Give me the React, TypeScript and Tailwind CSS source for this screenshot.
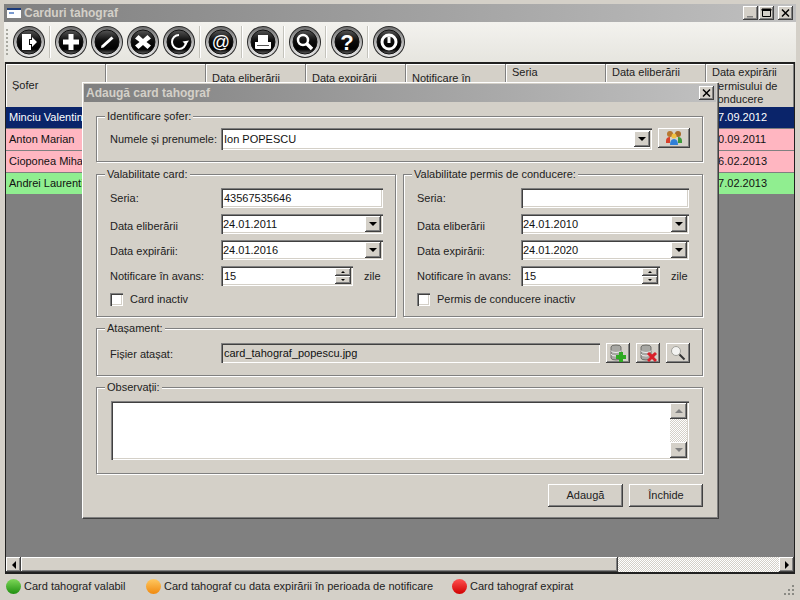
import React from "react";

const raised = "bg-[#d4d0c8] shadow-[inset_-1px_-1px_0_#404040,inset_1px_1px_0_#fff,inset_-2px_-2px_0_#808080]";
const sunken = "shadow-[inset_1px_1px_0_#808080,inset_2px_2px_0_#404040,inset_-1px_-1px_0_#fff,inset_-2px_-2px_0_#d4d0c8]";
const etched = "border border-[#808080] shadow-[inset_1px_1px_0_#fff,1px_1px_0_#fff]";
const dither = "bg-[repeating-conic-gradient(#fff_0_25%,#d4d0c8_0_50%)] bg-[length:2px_2px]";

function Glossy({ children }: { children: React.ReactNode }) {
  return (
    <svg width="34" height="34" viewBox="0 0 34 34" className="shrink-0">
      <defs>
        <linearGradient id="ring" x1="0" y1="0" x2="0" y2="1">
          <stop offset="0" stopColor="#6e6e6e" />
          <stop offset="0.5" stopColor="#b5b5b5" />
          <stop offset="1" stopColor="#e6e6e6" />
        </linearGradient>
        <linearGradient id="core" x1="0" y1="0" x2="0" y2="1">
          <stop offset="0" stopColor="#555" />
          <stop offset="0.45" stopColor="#0c0c0c" />
          <stop offset="0.8" stopColor="#000" />
          <stop offset="1" stopColor="#666" />
        </linearGradient>
      </defs>
      <circle cx="17" cy="17" r="16" fill="#2a2a2a" />
      <circle cx="17" cy="17" r="15" fill="url(#ring)" />
      <circle cx="17" cy="17" r="12" fill="url(#core)" stroke="#111" />
      {children}
    </svg>
  );
}

const Sep = () => <div className="w-[2px] h-[32px] mx-[3px] bg-[#c4c3bc] border-r border-white shrink-0" />;

function Toolbar() {
  return (
    <div className="h-[40px] shrink-0 flex items-center pl-[2px] bg-gradient-to-b from-[#f3f2ee] to-[#e6e5df]">
      <div className="w-[3px] h-[26px] mr-[3px] border-l-2 border-dotted border-[#a8a8a0]" />
      <Glossy><path d="M10 9h9v5h-2v6h2v5h-9z M18 15h2v-3l5 5-5 5v-3h-2z" fill="#fff" /></Glossy>
      <Sep />
      <div className="flex gap-[2px] items-center">
        <Glossy><path d="M14.500 9h5v5.500H25v5h-5.500V25h-5v-5.500H9v-5h5.500z" fill="#fff" /></Glossy>
        <Glossy><path d="M11 23l.500-2.500 10-9 2 2-10 9z" fill="#fff" /></Glossy>
        <Glossy><path d="M12.500 10l4.500 4 4.500-4 3.500 3.500-4.500 3.500 4.500 3.500-3.500 3.500-4.500-4-4.500 4L9 20.500l4.500-3.500L9 13.500z" fill="#fff" /></Glossy>
        <Glossy><path d="M17 10a7 7 0 1 0 7 7" fill="none" stroke="#fff" strokeWidth="2" /><path d="M20.500 16.500l3.500 3.500 3-4.500z" fill="#fff" /></Glossy>
      </div>
      <Sep />
      <Glossy><text x="17" y="23" textAnchor="middle" fontSize="18" fontFamily="'Liberation Sans',sans-serif" fill="#fff">@</text></Glossy>
      <Sep />
      <Glossy><path d="M12 10h10v7h3v6q0 1-1 1H10q-1 0-1-1v-6h3z" fill="#fff" /><path d="M11 20h12v1H11z" fill="#555" /></Glossy>
      <Sep />
      <Glossy><circle cx="15" cy="15" r="5" fill="none" stroke="#fff" strokeWidth="2.500" /><path d="M18.500 18.500l5.500 5.500" stroke="#fff" strokeWidth="3.500" /></Glossy>
      <Sep />
      <Glossy><text x="17" y="25" textAnchor="middle" fontSize="22" fontWeight="bold" fontFamily="'Liberation Sans',sans-serif" fill="#fff">?</text></Glossy>
      <Sep />
      <Glossy><circle cx="17" cy="17" r="7" fill="none" stroke="#fff" strokeWidth="3" /><path d="M17 11.500v6.500" stroke="#fff" strokeWidth="3" /></Glossy>
    </div>
  );
}

function TitleBar({ title, children, small }: { title: string; children: React.ReactNode; small?: boolean }) {
  return (
    <div className="h-[18px] shrink-0 flex items-center bg-gradient-to-r from-[#808080] to-[#c0c0c0] pl-[2px] pr-[2px]">
      {!small && (
        <svg width="16" height="16" viewBox="0 0 16 16" className="mr-[2px] shrink-0">
          <path d="M1 3h14v10H1z" fill="#fff" />
          <path d="M1 3h14v2H1z" fill="#1a3a7a" />
          <path d="M3 7h5v2H3z" fill="#7a9ad0" />
        </svg>
      )}
      <span className="flex-1 text-[12px] font-bold text-[#d4d0c8] whitespace-nowrap">{title}</span>
      {children}
    </div>
  );
}

function TitleBtn({ kind }: { kind: "min" | "max" | "close" }) {
  return (
    <div className={`w-[15px] h-[14px] flex items-center justify-center ${raised}`}>
      <svg width="11" height="10" viewBox="0 0 11 10">
        {kind === "min" && <path d="M2 8h6v1.500H2z" fill="#808080" />}
        {kind === "max" && <path d="M1.500 1.500h8v7h-8z M1 1h9v1.500H1z" fill="none" stroke="#000" />}
        {kind === "close" && <path d="M2 1.500l7 7M9 1.500l-7 7" stroke="#000" strokeWidth="1.500" />}
      </svg>
    </div>
  );
}

const cols = [
  { w: "w-[100px]", head: ["Șofer"], pad: "pt-[15px]" },
  { w: "w-[100px]", head: [""], pad: "pt-[8px]" },
  { w: "w-[100px]", head: ["Data eliberării", "card"], pad: "pt-[8px]" },
  { w: "w-[100px]", head: ["Data expirării", "card"], pad: "pt-[8px]" },
  { w: "w-[100px]", head: ["Notificare în", "avans"], pad: "pt-[8px]" },
  { w: "w-[100px]", head: ["Seria"], pad: "pt-[2px]" },
  { w: "w-[100px]", head: ["Data eliberării"], pad: "pt-[2px]" },
  { w: "w-[88px]", head: ["Data expirării", "permisului de", "conducere"], pad: "pt-[2px]" },
];

const rows = [
  { c: "bg-[#0a246a] text-white", n: "Minciu Valentin", d: "17.09.2012" },
  { c: "bg-[#ffb6c1] text-[#111]", n: "Anton Marian", d: "10.09.2011" },
  { c: "bg-[#ffb6c1] text-[#111]", n: "Cioponea Mihai", d: "16.02.2013" },
  { c: "bg-[#90ee90] text-[#111]", n: "Andrei Laurentiu", d: "17.02.2013" },
];

function Grid() {
  return (
    <div className="flex-1 min-h-0 mx-[5px] border-t-2 border-x border-[#202020] bg-[#808080] flex flex-col overflow-hidden">
      <div className="h-[43px] flex shrink-0 bg-[#d4d0c8]">
        {cols.map((c, i) => (
          <div key={i} className={`${c.w} shrink-0 pl-[6px] ${c.pad} text-[11px] leading-[13.500px] text-[#222] border-r border-[#808080] shadow-[inset_1px_1px_0_#fff] whitespace-nowrap`}>
            {c.head.map((h, j) => <div key={j}>{h}</div>)}
          </div>
        ))}
      </div>
      {rows.map((r) => (
        <div key={r.n} className={`h-[22px] flex items-center shrink-0 text-[11px] border-b border-[#808080] ${r.c}`}>
          <div className="w-[600px] shrink-0 pl-[3px]">{r.n}</div>
          <div className="w-[100px] shrink-0" />
          <div className="pl-[6px]">{r.d}</div>
        </div>
      ))}
      <div className="flex-1" />
      <div className="h-[17px] shrink-0 flex bg-[#d4d0c8] border-b-2 border-[#202020]">
        <div className={`w-[15px] flex items-center justify-center ${raised}`}><div className="w-0 h-0 border-y-[4px] border-y-transparent border-r-[4px] border-r-black" /></div>
        <div className={`w-[597px] ${raised}`} />
        <div className={`flex-1 ${dither}`} />
        <div className={`w-[15px] flex items-center justify-center ${raised}`}><div className="w-0 h-0 border-y-[4px] border-y-transparent border-l-[4px] border-l-black" /></div>
      </div>
    </div>
  );
}

function Ball({ id, from, to }: { id: string; from: string; to: string }) {
  return (
    <svg width="15" height="15" viewBox="0 0 15 15" className="shrink-0">
      <defs>
        <linearGradient id={id} x1="0" y1="0" x2="0" y2="1">
          <stop offset="0" stopColor={from} />
          <stop offset="1" stopColor={to} />
        </linearGradient>
      </defs>
      <circle cx="7.500" cy="7.500" r="7.500" fill={`url(#${id})`} />
    </svg>
  );
}

function StatusBar() {
  return (
    <div className="h-[24px] shrink-0 flex items-center pl-[2px] text-[11px] text-[#222] relative whitespace-nowrap">
      <Ball id="ballG" from="#7ed858" to="#1f8f10" />
      <span className="ml-[3px] w-[122px]">Card tahograf valabil</span>
      <Ball id="ballO" from="#ffc860" to="#f08a10" />
      <span className="ml-[3px] w-[288px]">Card tahograf cu data expirării în perioada de notificare</span>
      <Ball id="ballR" from="#ff5050" to="#d00000" />
      <span className="ml-[3px]">Card tahograf expirat</span>
      <svg width="12" height="12" viewBox="0 0 12 12" className="ml-auto mr-[1px] mt-[7px]">
        <path d="M9 1h2v2H9zM5 5h2v2H5zM9 5h2v2H9zM1 9h2v2H1zM5 9h2v2H5zM9 9h2v2H9z" fill="#8a8a84" />
      </svg>
    </div>
  );
}

function Group({ title, className, children }: { title: string; className: string; children: React.ReactNode }) {
  return (
    <div className={`relative ${etched} ${className}`}>
      <span className="absolute -top-[8px] left-[8px] px-[2px] bg-[#d4d0c8] text-[11px] leading-[14px] text-[#222] whitespace-nowrap">{title}</span>
      {children}
    </div>
  );
}

const Arrow = () => <div className="w-0 h-0 border-x-[4px] border-x-transparent border-t-[4px] border-t-black" />;

function DropBtn() {
  return <div className={`w-[16px] h-[16px] flex items-center justify-center shrink-0 ${raised}`}><Arrow /></div>;
}

function Field({ text, w, drop, spin }: { text: string; w: string; drop?: boolean; spin?: boolean }) {
  return (
    <div className={`${w} h-[20px] flex items-center ${drop ? "pl-[2px]" : "pl-[3px]"} pr-[2px] ${sunken} bg-white text-[11px] text-[#111] shrink-0`}>
      <span className="flex-1 whitespace-nowrap">{text}</span>
      {drop && <DropBtn />}
      {spin && (
        <div className="w-[16px] h-[16px] flex flex-col shrink-0">
          <div className={`h-[8px] flex items-center justify-center ${raised}`}><div className="w-0 h-0 border-x-[2px] border-x-transparent border-b-[2px] border-b-black" /></div>
          <div className={`h-[8px] flex items-center justify-center ${raised}`}><div className="w-0 h-0 border-x-[2px] border-x-transparent border-t-[2px] border-t-black" /></div>
        </div>
      )}
    </div>
  );
}

function Row({ label, labelW, children, mb, nudge = "" }: { label: string; labelW: string; children: React.ReactNode; mb: string; nudge?: string }) {
  return (
    <div className={`flex items-center h-[20px] ${mb}`}>
      <span className={`${labelW} ${nudge} shrink-0 text-[11px] text-[#222] whitespace-nowrap`}>{label}</span>
      {children}
    </div>
  );
}

function Validity({ title, seria, d1, d2, check, w, spinW, lw, cls }: { title: string; seria: string; d1: string; d2: string; check: string; w: string; spinW: string; lw: string; cls: string }) {
  return (
    <Group title={title} className={`h-[143px] ${cls} pt-[13px] pl-[13px]`}>
      <Row label="Seria:" labelW={lw} mb="mb-[6px]"><Field text={seria} w={w} /></Row>
      <Row label="Data eliberării" labelW={lw} mb="mb-[6px]" nudge="pt-[4px]"><Field text={d1} w={w} drop /></Row>
      <Row label="Data expirării:" labelW={lw} mb="mb-[6px]" nudge="pt-[2px]"><Field text={d2} w={w} drop /></Row>
      <Row label="Notificare în avans:" labelW={lw} mb="mb-[6px]">
        <Field text="15" w={spinW} spin />
        <span className="ml-[11px] text-[11px] text-[#222]">zile</span>
      </Row>
      <div className="flex items-center h-[14px]">
        <div className={`w-[13px] h-[13px] bg-white ${sunken}`} />
        <span className="ml-[7px] text-[11px] text-[#222]">{check}</span>
      </div>
    </Group>
  );
}

function SmallBtn({ children, w = "w-[24px]", h = "h-[20px]" }: { children: React.ReactNode; w?: string; h?: string }) {
  return <div className={`${w} ${h} flex items-center justify-center shrink-0 ${raised}`}>{children}</div>;
}

function Db({ children }: { children: React.ReactNode }) {
  return (
    <svg width="20" height="18" viewBox="0 0 20 18">
      <path d="M3 3a5 2 0 0 1 10 0v11a5 2 0 0 1-10 0z" fill="#a8a8a4" stroke="#5c5c58" strokeWidth="0.800" />
      <path d="M3 6.500a5 2 0 0 0 10 0M3 10a5 2 0 0 0 10 0" fill="none" stroke="#eee" />
      {children}
    </svg>
  );
}

function Dialog() {
  return (
    <div className="absolute left-[82px] top-[82px] w-[636px] h-[436px] bg-[#d4d0c8] p-[2px] shadow-[inset_1px_1px_0_#fff,inset_-1px_-1px_0_#808080,1px_1px_0_#404040] flex flex-col">
      <TitleBar title="Adaugă card tahograf" small>
        <TitleBtn kind="close" />
      </TitleBar>
      <div className="flex-1 px-[12px] pt-[14px] flex flex-col">
        <Group title="Identificare șofer:" className="h-[46px] w-[607px] shrink-0 pt-[11px] pl-[13px] flex">
          <span className="w-[111px] pt-[3px] text-[11px] text-[#222] whitespace-nowrap">Numele și prenumele:</span>
          <div className={`w-[431px] h-[22px] bg-white flex items-center pl-[3px] pr-[2px] text-[11px] text-[#111] ${sunken}`}>
            <span className="flex-1">Ion POPESCU</span>
            <DropBtn />
          </div>
          <div className="ml-[6px]">
            <SmallBtn w="w-[32px]">
              <svg width="18" height="16" viewBox="0 0 18 16">
                <circle cx="5" cy="4" r="3" fill="#b8772e" />
                <circle cx="13" cy="4" r="3" fill="#a86a28" />
                <path d="M1 11q0-4 4-4v6H1z" fill="#d8402a" />
                <path d="M17 11q0-4-4-4v6h4z" fill="#3c9a3a" />
                <circle cx="9" cy="6" r="2.500" fill="#f0c040" />
                <path d="M5 15q0-6 4-6t4 6z" fill="#2f7fd8" />
              </svg>
            </SmallBtn>
          </div>
        </Group>
        <div className="flex gap-[7px] mt-[12px] w-[607px] shrink-0">
          <Validity title="Valabilitate card:" seria="43567535646" d1="24.01.2011" d2="24.01.2016" check="Card inactiv" w="w-[162px]" spinW="w-[132px]" lw="w-[111px]" cls="w-[300px]" />
          <Validity title="Valabilitate permis de conducere:" seria="" d1="24.01.2010" d2="24.01.2020" check="Permis de conducere inactiv" w="w-[168px]" spinW="w-[139px]" lw="w-[104px]" cls="w-[300px]" />
        </div>
        <Group title="Atașament:" className="h-[48px] w-[607px] mt-[11px] shrink-0 pt-[14px] pl-[13px] flex items-start">
          <span className="w-[111px] pt-[3px] text-[11px] text-[#222]">Fișier atașat:</span>
          <div className={`w-[379px] h-[20px] flex items-center pl-[3px] text-[11px] text-[#111] bg-[#d4d0c8] ${sunken}`}>card_tahograf_popescu.jpg</div>
          <div className="ml-[6px] flex gap-[6px]">
            <SmallBtn><Db><path d="M11 8h4v3h3v4h-3v3h-4v-3H8v-4h3z" fill="#2eaa22" /></Db></SmallBtn>
            <SmallBtn><Db><path d="M9 10l2-2 3 2.500L17 8l2 2-3 3 3 3-2 2-3-3-3 3-2-2 3-3z" fill="#d8202a" /></Db></SmallBtn>
            <SmallBtn>
              <svg width="18" height="16" viewBox="0 0 18 16">
                <circle cx="7" cy="6" r="4.500" fill="#f4f4f2" stroke="#a0a09a" />
                <path d="M10.500 9.500l5 5" stroke="#333" strokeWidth="2" />
              </svg>
            </SmallBtn>
          </div>
        </Group>
        <Group title="Observații:" className="h-[87px] w-[607px] mt-[11px] shrink-0 pt-[13px] pl-[14px]">
          <div className={`w-[578px] h-[59px] bg-white flex justify-end p-[2px] ${sunken}`}>
            <div className="w-[17px] flex flex-col">
              <div className={`h-[16px] flex items-center justify-center ${raised}`}><div className="w-0 h-0 border-x-[4px] border-x-transparent border-b-[4px] border-b-[#808080]" /></div>
              <div className={`flex-1 ${dither}`} />
              <div className={`h-[16px] flex items-center justify-center ${raised}`}><div className="w-0 h-0 border-x-[4px] border-x-transparent border-t-[4px] border-t-[#808080]" /></div>
            </div>
          </div>
        </Group>
        <div className="flex justify-end gap-[6px] mt-[10px] w-[607px] shrink-0">
          <div className={`w-[75px] h-[23px] flex items-center justify-center text-[11px] text-[#222] ${raised}`}>Adaugă</div>
          <div className={`w-[74px] h-[23px] flex items-center justify-center text-[11px] text-[#222] ${raised}`}>Închide</div>
        </div>
      </div>
    </div>
  );
}

export default function App() {
  return (
    <div className="relative w-[800px] h-[600px] overflow-hidden bg-[#d4d0c8] font-['Liberation_Sans',sans-serif] p-[4px] pb-[2px] flex flex-col">
      <TitleBar title="Carduri tahograf">
        <div className="flex items-center gap-[1px] mr-[1px]">
          <TitleBtn kind="min" />
          <TitleBtn kind="max" />
          <div className="w-[2px]" />
          <TitleBtn kind="close" />
        </div>
      </TitleBar>
      <Toolbar />
      <div className="flex-1 min-h-0 flex flex-col -mx-[4px]">
        <Grid />
      </div>
      <StatusBar />
      <Dialog />
    </div>
  );
}
